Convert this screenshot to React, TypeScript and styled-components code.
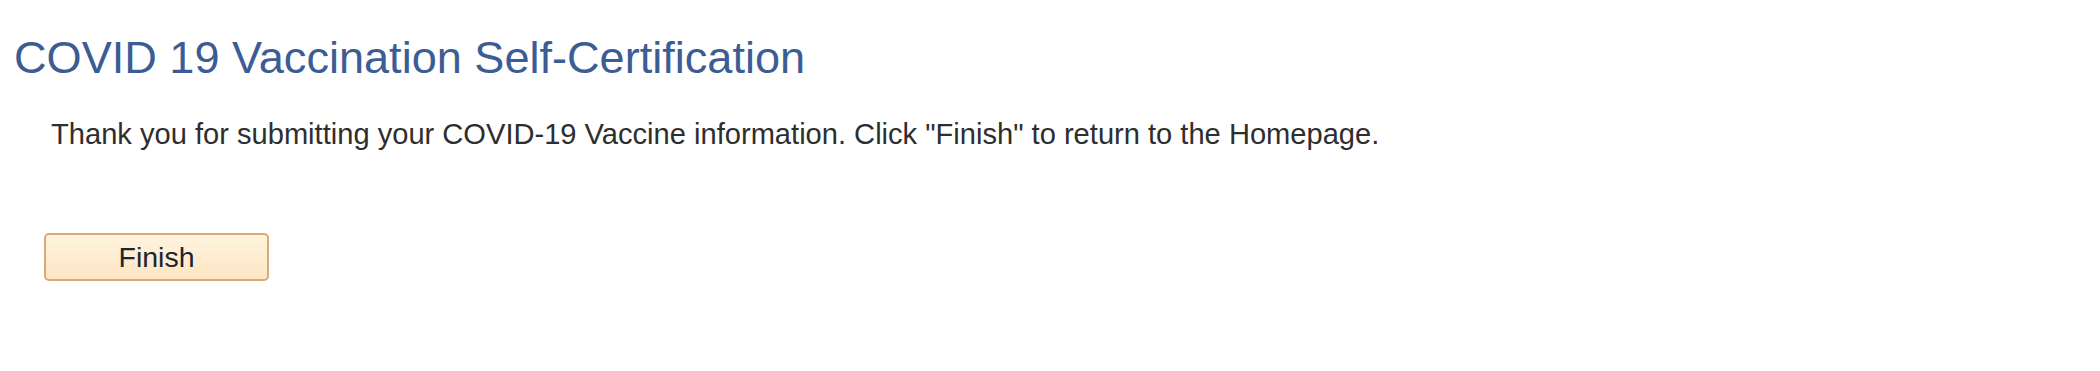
import React from 'react';
import styled, { createGlobalStyle } from 'styled-components';

const GlobalStyle = createGlobalStyle`
  html, body {
    margin: 0;
    padding: 0;
    background: #ffffff;
  }

  body {
    font-family: 'Liberation Sans', Arial, sans-serif;
  }
`;

const Page = styled.div`
  width: 2100px;
  height: 371px;
  padding: 35px 0 0 14px;
  box-sizing: border-box;
  display: flex;
  flex-direction: column;
  align-items: flex-start;
`;

const Title = styled.h1`
  margin: 0;
  font-size: 45.1px;
  line-height: 45px;
  font-weight: 400;
  color: #3b5d94;
`;

const Message = styled.p`
  margin: 40px 0 0 37px;
  font-size: 29.1px;
  line-height: 29px;
  color: #2e2e2e;
`;

const Actions = styled.div`
  margin: 84px 0 0 30px;
  display: flex;
`;

const FinishButton = styled.button`
  width: 225px;
  height: 48px;
  padding: 0;
  display: flex;
  justify-content: center;
  align-items: center;
  font-family: 'Liberation Sans', Arial, sans-serif;
  font-size: 28.5px;
  color: #1c2430;
  background: linear-gradient(#fff4de, #fde6c3);
  border: 2px solid #dca879;
  border-radius: 5px;
  cursor: pointer;

  &:hover {
    background: linear-gradient(#ffefd0, #fcdcab);
  }
`;

export default function App() {
  return (
    <>
      <GlobalStyle />
      <Page>
        <Title>COVID 19 Vaccination Self-Certification</Title>
        <Message>
          Thank you for submitting your COVID-19 Vaccine information. Click
          "Finish" to return to the Homepage.
        </Message>
        <Actions>
          <FinishButton type="button">Finish</FinishButton>
        </Actions>
      </Page>
    </>
  );
}
